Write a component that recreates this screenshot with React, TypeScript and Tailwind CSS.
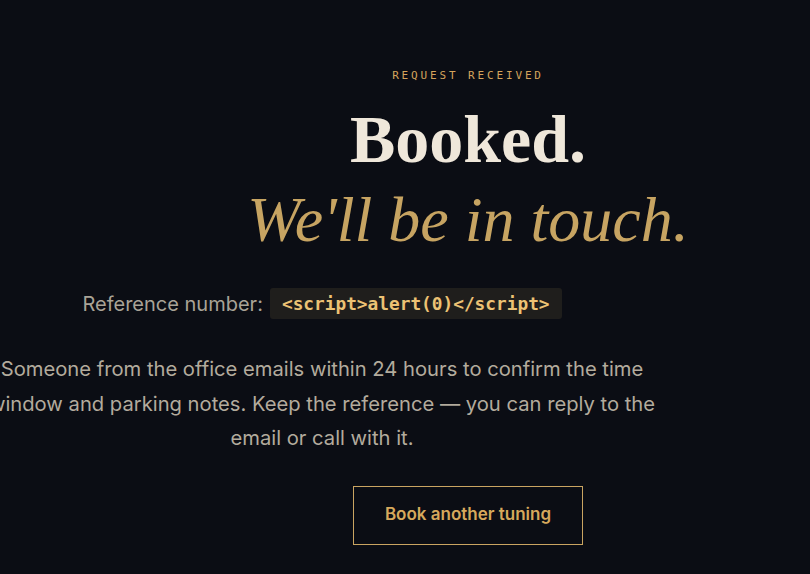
import React from "react";

export default function App() {
  return (
    <div className="min-h-[574px] w-full overflow-hidden bg-[#0b0d14]" style={{ fontFamily: "Inter, 'Liberation Sans', sans-serif" }}>
      <div className="flex flex-col items-center pl-[126px] pt-[68px]">
        <div className="text-[11px] leading-[16px] tracking-[0.26em] uppercase text-[#d4a45c] font-['DejaVu_Sans_Mono',monospace]">
          Request received
        </div>
        <h1 className="mt-[21px] text-[68px] leading-[68px] font-bold text-[#efe7da] font-['Liberation_Serif',serif]">
          Booked.
        </h1>
        <div className="mt-[15px] text-[64px] leading-[64px] italic text-[#c7a462] font-['Liberation_Serif',serif]">
          We'll be in touch.
        </div>
        <div className="mt-[36px] mr-[292px] flex items-center gap-[7px] whitespace-nowrap">
          <span className="text-[20px] text-[#a9a397]">Reference number:</span>
          <code className="rounded-[3px] bg-[#1f1e1c] px-[12px] py-[4px] text-[17.8px] leading-[23px] font-bold text-[#ecc274] font-['DejaVu_Sans_Mono',monospace]">
            {"<script>alert(0)</script>"}
          </code>
        </div>
        <p className="mt-[33px] mr-[292px] w-[674px] shrink-0 text-center text-[20.2px] leading-[34.5px] text-[#b3ab9d]">
          Someone from the office emails within 24 hours to confirm the time window and parking notes. Keep the reference — you can reply to the email or call with it.
        </p>
        <button className="mt-[30px] h-[59px] w-[230px] border border-[#c9a461] text-[17px] font-semibold text-[#d6a95c]">
          Book another tuning
        </button>
      </div>
    </div>
  );
}
